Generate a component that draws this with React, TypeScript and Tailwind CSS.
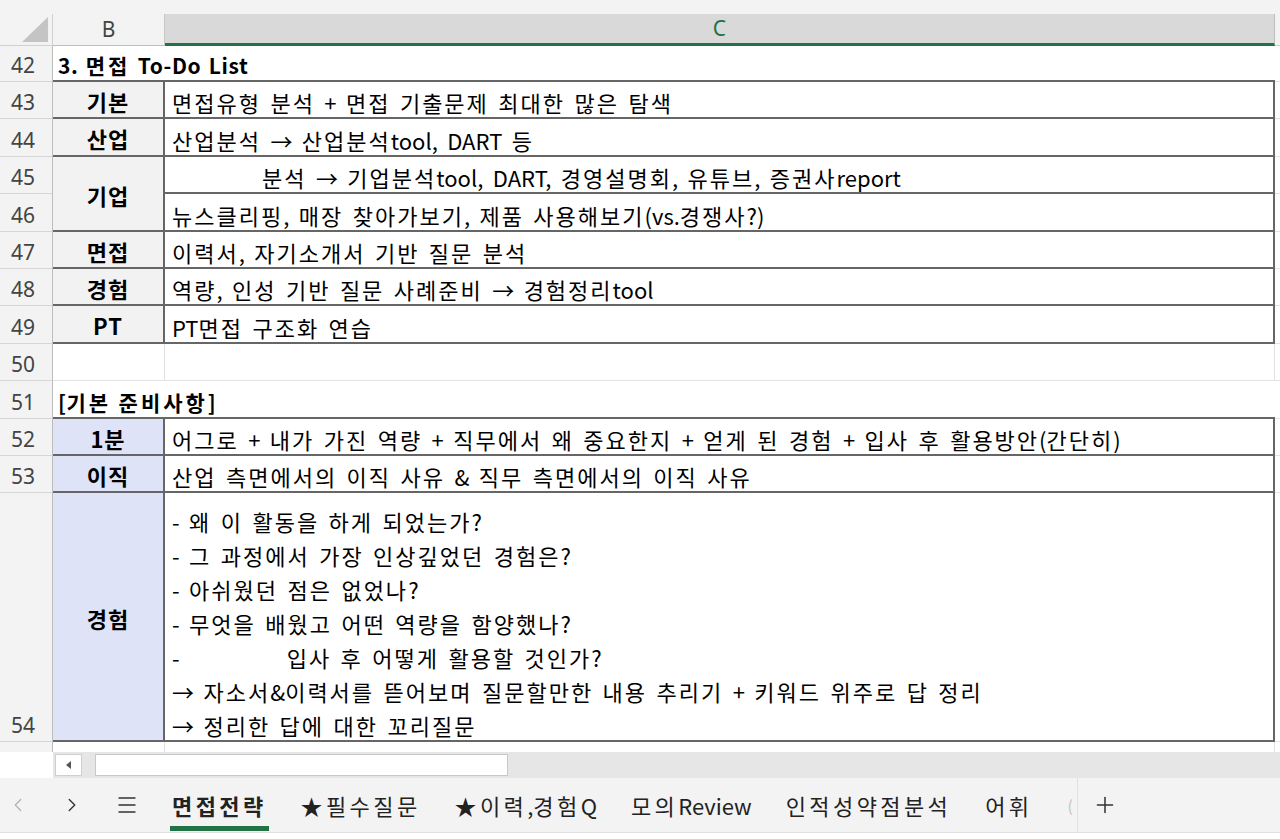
import { ChevronLeft, ChevronRight, Menu, Plus } from "lucide-react";

const rowHead =
  "bg-[#f3f3f3] border-r border-r-[#bdbdbd] border-b border-b-[#d6d6d6] flex items-end justify-center pr-[6px] pb-[1px] text-[21px] leading-[30px] text-[#444] font-['Noto_Sans',sans-serif]";
const label =
  "border-r-2 border-b-2 border-[#666] flex items-center justify-center pt-[3px] font-bold text-[22px] tracking-[1px] text-black";
const body =
  "border-r-2 border-b-2 border-[#666] flex items-end pl-[7px] text-[22px] leading-[30px] [word-spacing:4.5px] text-black whitespace-pre";
const edge = "bg-white border-b border-[#e2e2e2]";
const heading =
  "col-span-2 border-b-2 border-[#666] flex items-end pl-[5px] font-bold text-[21px] leading-[30px] tracking-[0.6px] [word-spacing:2px] text-black whitespace-pre";

// Hangul runs are set a little wider than latin ones, like Malgun Gothic
function K({ t, wide = "tracking-[2px]" }: { t: string; wide?: string }) {
  return (
    <span>
      {t.split(/([가-힣★]+)/).map((s, i) =>
        /[가-힣★]/.test(s) ? (
          <span key={i} className={wide}>
            {s}
          </span>
        ) : (
          s
        )
      )}
    </span>
  );
}

const table1 = [
  { n: 43, k: "기본", v: "면접유형 분석 + 면접 기출문제 최대한 많은 탐색" },
  { n: 44, k: "산업", v: "산업분석 → 산업분석tool, DART 등" },
];
const table2 = [
  { n: 47, k: "면접", v: "이력서, 자기소개서 기반 질문 분석" },
  { n: 48, k: "경험", v: "역량, 인성 기반 질문 사례준비 → 경험정리tool" },
  { n: 49, k: "PT", v: "PT면접 구조화 연습" },
];

const expLines = [
  "- 왜 이 활동을 하게 되었는가?",
  "- 그 과정에서 가장 인상깊었던 경험은?",
  "- 아쉬웠던 점은 없었나?",
  "- 무엇을 배웠고 어떤 역량을 함양했나?",
  "GAP",
  "→ 자소서&이력서를 뜯어보며 질문할만한 내용 추리기 + 키워드 위주로 답 정리",
  "→ 정리한 답에 대한 꼬리질문",
];

const tabs = ["면접전략", "★필수질문", "★이력,경험Q", "모의Review", "인적성약점분석", "어휘"];

export default function App() {
  return (
    <div className="w-[1280px] h-[839px] overflow-hidden bg-white font-['Malgun_Gothic','Noto_Sans_CJK_KR',sans-serif]">
      <div className="h-[14px] bg-[#f3f3f3]" />

      {/* column headers */}
      <div className="flex h-[32px]">
        <div className="w-[53px] bg-[#f3f3f3] border-r border-[#d0d0d0] border-b border-b-[#d0d0d0]">
          <svg width="53" height="31" viewBox="0 0 53 31">
            <polygon points="22,28 48,28 48,3" fill="#c4c4c4" />
          </svg>
        </div>
        <div className="w-[112px] bg-[#f3f3f3] border-r border-[#c8c8c8] border-b border-b-[#bdbdbd] flex items-center justify-center text-[21px] text-[#444] font-['Noto_Sans',sans-serif]">
          B
        </div>
        <div className="w-[1110px] bg-[#d9d9d9] border-r border-[#bdbdbd] border-b-[3px] border-b-[#217346] flex items-center justify-center text-[21px] text-[#217346] font-['Noto_Sans',sans-serif]">
          C
        </div>
        <div className="flex-1 bg-[#f3f3f3] border-b border-[#d0d0d0]" />
      </div>

      {/* sheet */}
      <div className="grid grid-cols-[53px_112px_1110px_5px] grid-rows-[36px_37px_38px_37px_38px_37px_37px_38px_37px_38px_37px_37px_249px_10px]">
        {/* 42 */}
        <div className={rowHead}>42</div>
        <div className={heading}>
          <K t="3. 면접 To-Do List" wide="tracking-[3px]" />
        </div>
        <div className={edge} />

        {table1.map((r) => (
          <div key={r.n} className="contents">
            <div className={rowHead}>{r.n}</div>
            <div className={`${label} bg-[#f2f2f2]`}>{r.k}</div>
            <div className={body}>
              <K t={r.v} />
            </div>
            <div className={edge} />
          </div>
        ))}

        {/* 45-46 */}
        <div className={rowHead}>45</div>
        <div className={`${label} bg-[#f2f2f2] row-span-2`}>기업</div>
        <div className={`${body} pl-[97px]`}>
          <K t="분석 → 기업분석tool, DART, 경영설명회, 유튜브, 증권사report" />
        </div>
        <div className={edge} />
        <div className={rowHead}>46</div>
        <div className={body}>
          <K t="뉴스클리핑, 매장 찾아가보기, 제품 사용해보기(vs.경쟁사?)" />
        </div>
        <div className={edge} />

        {table2.map((r) => (
          <div key={r.n} className="contents">
            <div className={rowHead}>{r.n}</div>
            <div className={`${label} bg-[#f2f2f2]`}>{r.k}</div>
            <div className={body}>
              <K t={r.v} />
            </div>
            <div className={edge} />
          </div>
        ))}

        {/* 50 */}
        <div className={rowHead}>50</div>
        <div className="border-r border-b border-[#e2e2e2]" />
        <div className="border-r border-b border-[#e2e2e2]" />
        <div className={edge} />

        {/* 51 */}
        <div className={rowHead}>51</div>
        <div className={heading}>
          <K t="[기본 준비사항]" wide="tracking-[3px]" />
        </div>
        <div className={edge} />

        {/* 52 */}
        <div className={rowHead}>52</div>
        <div className={`${label} bg-[#dfe3f7]`}>1분</div>
        <div className={body}>
          <K t="어그로 + 내가 가진 역량 + 직무에서 왜 중요한지 + 얻게 된 경험 + 입사 후 활용방안(간단히)" />
        </div>
        <div className={edge} />

        {/* 53 */}
        <div className={rowHead}>53</div>
        <div className={`${label} bg-[#dfe3f7]`}>이직</div>
        <div className={body}>
          <K t="산업 측면에서의 이직 사유 & 직무 측면에서의 이직 사유" />
        </div>
        <div className={edge} />

        {/* 54 */}
        <div className={rowHead}>54</div>
        <div className={`${label} bg-[#dfe3f7]`}>경험</div>
        <div className={`${body} items-start`}>
          <div className="mt-auto flex flex-col leading-[34px] translate-y-[2px]">
            {expLines.map((l, i) =>
              l === "GAP" ? (
                <div key={i} className="flex">
                  <span>-</span>
                  <span className="ml-[107px]">
                    <K t="입사 후 어떻게 활용할 것인가?" />
                  </span>
                </div>
              ) : (
                <div key={i}>
                  <K t={l} />
                </div>
              )
            )}
          </div>
        </div>
        <div className={edge} />

        {/* 55 partial */}
        <div className="bg-[#f3f3f3] border-r border-[#bdbdbd]" />
        <div className="border-r border-[#e2e2e2]" />
        <div className="border-r border-[#e2e2e2]" />
        <div className="bg-white" />
      </div>

      {/* horizontal scrollbar */}
      <div className="flex h-[26px]">
        <div className="w-[53px] bg-white" />
        <div className="flex-1 bg-[#e6e6e6] flex items-center">
          <div className="ml-[2px] w-[27px] h-[22px] bg-white border border-[#cfcfcf] flex items-center justify-center">
            <svg width="8" height="10" viewBox="0 0 8 10">
              <polygon points="6,1 6,9 1,5" fill="#555" />
            </svg>
          </div>
          <div className="ml-[13px] w-[413px] h-[22px] bg-white border border-[#c8c8c8]" />
        </div>
      </div>

      {/* sheet tabs */}
      <div className="flex h-[55px] bg-[#f3f3f3] border-b border-[#e0e0e0]">
        <div className="w-[36px] flex items-center justify-center text-[#b0b0b0]">
          <ChevronLeft size={22} strokeWidth={1.3} />
        </div>
        <div className="ml-[18px] w-[36px] flex items-center justify-center text-[#333]">
          <ChevronRight size={22} strokeWidth={1.5} />
        </div>
        <div className="ml-[19px] w-[36px] flex items-center justify-center text-[#333]">
          <Menu size={24} strokeWidth={1.4} />
        </div>
        <div className="ml-[10px] flex">
          {tabs.map((t, i) => (
            <div
              key={t}
              className={`relative px-[17px] flex items-center text-[22px] text-[#222] whitespace-nowrap ${
                i === 0 ? "font-bold" : ""
              }`}
            >
              <K t={t} wide="tracking-[3.4px]" />
              {i === 0 && (
                <div className="absolute left-[15px] right-[15px] bottom-[1px] h-[5px] bg-[#217346]" />
              )}
            </div>
          ))}
          <div className="w-[28px] pl-[18px] flex items-center text-[#c4c4c4] text-[16px]">(</div>
        </div>
        <div className="flex-1 border-l border-[#e2e2e2] flex items-center pl-[14px] text-[#333]">
          <Plus size={26} strokeWidth={1.4} />
        </div>
      </div>
    </div>
  );
}
